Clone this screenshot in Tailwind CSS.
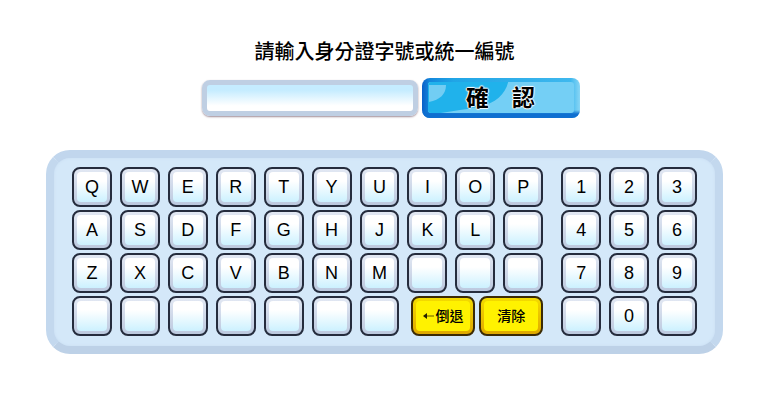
<!DOCTYPE html>
<html lang="zh-Hant">
<head>
    <meta charset="UTF-8">
    <meta name="viewport" content="width=device-width, initial-scale=1.0">
    <title>請輸入身分證字號或統一編號</title>
    <script src="https://cdn.jsdelivr.net/npm/@tailwindcss/browser@4"></script>
</head>
<body class="bg-white font-['Liberation_Sans','Noto_Sans_CJK_TC',sans-serif] text-black">
    <main class="mx-auto max-w-[681px] pl-1 pt-9">
        <form id="idForm" class="flex flex-col items-center">
            <label for="idNumber" class="text-xl leading-8 font-medium">請輸入身分證字號或統一編號</label>
            <div class="mt-2.5 flex items-center gap-1 pl-3">
                <input id="idNumber" type="text" autocomplete="off" class="h-9 w-[216px] rounded-lg border-5 border-[#bfcfe3] bg-linear-to-b from-[#c5ecff] from-20% to-white to-80% px-2 text-lg shadow-[0_1px_2px_#a08c96] outline-none">
                <button type="submit" class="relative h-10 w-[158px] overflow-hidden rounded-lg text-[23px] font-bold">
                    <svg class="absolute inset-0 size-full" viewBox="0 0 158 40" preserveAspectRatio="none" aria-hidden="true">
                        <defs>
                            <linearGradient id="rim">
                                <stop offset="0" stop-color="#0a5fc8"/>
                                <stop offset="0.05" stop-color="#1488dc"/>
                                <stop offset="0.2" stop-color="#20a5e6"/>
                                <stop offset="0.94" stop-color="#3fb8ee"/>
                                <stop offset="1" stop-color="#8ad6f5"/>
                            </linearGradient>
                            <linearGradient id="base" x1="0" y1="0" x2="0" y2="1">
                                <stop offset="0.8" stop-color="#0f6fd0" stop-opacity="0"/>
                                <stop offset="0.9" stop-color="#0f6fd0"/>
                            </linearGradient>
                            <clipPath id="face"><rect x="6" y="4" width="146" height="31" rx="3"/></clipPath>
                        </defs>
                        <rect width="158" height="40" fill="url(#rim)"/>
                        <rect width="158" height="40" fill="url(#base)"/>
                        <g clip-path="url(#face)">
                            <rect width="158" height="40" fill="#74cff5"/>
                            <path d="M0 0H87C85 14 76 25 56 29C39 33 19 33 0 40Z" fill="#20b2eb"/>
                            <path d="M7 7H24C24 16 18 22 7 24Z" fill="#72cdf3"/>
                        </g>
                    </svg>
                    <span class="relative text-shadow-[1px_0_1px_white,-1px_0_1px_white,0_1px_1px_white,0_-1px_1px_white]">確　認</span>
                </button>
            </div>
        </form>

        <div id="keyboard" class="mt-8 flex gap-[18px] rounded-3xl border-8 border-x-[#c3d8ee] border-t-[#c1d6ed] border-b-[#bdd1e7] bg-[#d4e8f9] px-[18px] pt-[9px] pb-[10px] shadow-[inset_0_0_3px_#c8dcf1]">
            <div id="letters" class="grid flex-[472] grid-cols-10 gap-x-2 gap-y-[3px]"></div>
            <div id="digits" class="grid flex-[136] grid-cols-3 gap-x-2 gap-y-[3px]"></div>
        </div>
    </main>

    <script>
        const input = document.getElementById('idNumber');
        const keyClass = 'h-10 min-w-0 rounded-lg border-2 border-[#252c3d] bg-linear-to-b from-[#e2e8f3] to-[#bcc9df] p-[3px] text-lg leading-none cursor-pointer';
        const faceClass = 'flex size-full items-center justify-center rounded-sm bg-linear-to-b from-white from-30% to-[#ccf1ff]';
        const wideClass = 'h-10 min-w-0 flex-1 rounded-lg border-2 border-[#3b2b05] bg-linear-to-b from-[#f4dc00] to-[#dfa800] p-[3px] text-sm font-medium cursor-pointer';
        const wideFaceClass = 'flex size-full items-center justify-center rounded-sm bg-[#fff200]';

        function key(char) {
            const label = char === ' ' ? 'aria-label="空白鍵"' : '';
            return `<button type="button" ${label} data-key="${char.trim()}" class="${keyClass}"><span class="${faceClass}">${char.trim()}</span></button>`;
        }

        // Spaces are keys without a character
        document.getElementById('letters').innerHTML =
            [...'QWERTYUIOPASDFGHJKL ZXCVBNM          '].map(key).join('') + `
            <div class="col-span-3 flex gap-1 pl-1">
                <button type="button" data-action="back" class="${wideClass}">
                    <span class="${wideFaceClass}">
                        <svg class="h-2 w-3" viewBox="0 0 12 8" aria-hidden="true">
                            <path d="M0 4L4 1V7Z" fill="#241d00"/>
                            <path d="M4 4H11" stroke="#655900" stroke-width="1"/>
                        </svg>倒退
                    </span>
                </button>
                <button type="button" data-action="clear" class="${wideClass}"><span class="${wideFaceClass}">清除</span></button>
            </div>`;
        document.getElementById('digits').innerHTML = [...'123456789 0 '].map(key).join('');

        document.getElementById('keyboard').addEventListener('click', (e) => {
            const button = e.target.closest('button');
            if (!button) return;
            if (button.dataset.action === 'back') {
                input.value = input.value.slice(0, -1);
            } else if (button.dataset.action === 'clear') {
                input.value = '';
            } else {
                input.value += button.dataset.key;
            }
        });

        document.getElementById('idForm').addEventListener('submit', (e) => e.preventDefault());
    </script>
</body>
</html>
